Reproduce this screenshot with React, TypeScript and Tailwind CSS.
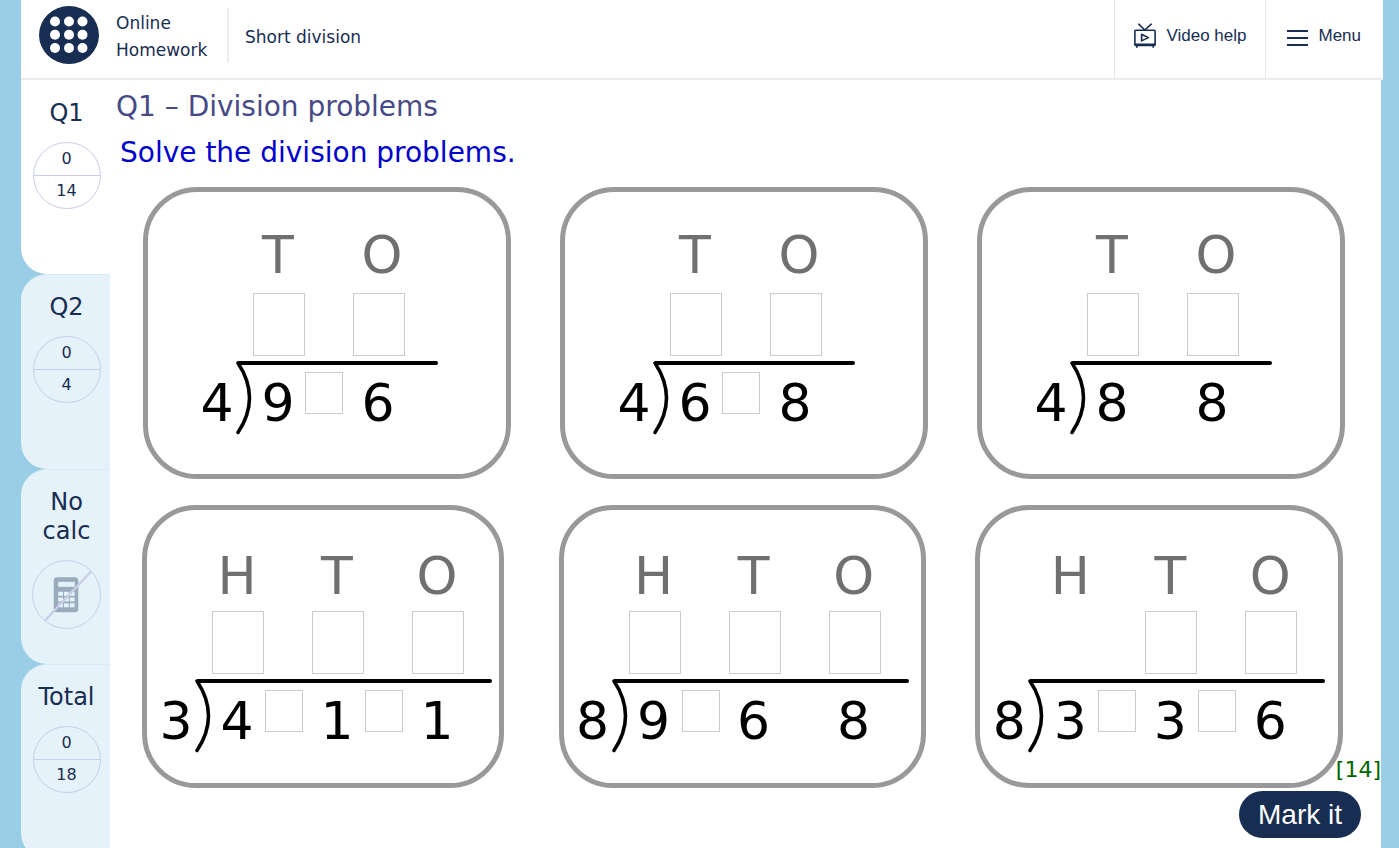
import React from 'react'
import clsx from 'clsx'

type Problem = {
  divisor: string
  digits: string[]
  // place columns that take an answer digit
  answers: boolean[]
  // carry box after the digit at the same index
  carries: boolean[]
}

const TWO_DIGIT: Problem[] = [
  { divisor: '4', digits: ['9', '6'], answers: [true, true], carries: [true, false] },
  { divisor: '4', digits: ['6', '8'], answers: [true, true], carries: [true, false] },
  { divisor: '4', digits: ['8', '8'], answers: [true, true], carries: [false, false] },
]

const THREE_DIGIT: Problem[] = [
  { divisor: '3', digits: ['4', '1', '1'], answers: [true, true, true], carries: [true, true, false] },
  { divisor: '8', digits: ['9', '6', '8'], answers: [true, true, true], carries: [true, false, false] },
  { divisor: '8', digits: ['3', '3', '6'], answers: [false, true, true], carries: [true, true, false] },
]

function Logo() {
  return (
    <svg width="60" height="58" viewBox="0 0 60 58" aria-hidden="true">
      <ellipse cx="30" cy="29" rx="30" ry="29" fill="#182d52" />
      {[15.5, 28.7, 42].map((cy) =>
        [16, 30, 43.5].map((cx) => <circle key={`${cx}-${cy}`} cx={cx} cy={cy} r="5" fill="#fff" />),
      )}
    </svg>
  )
}

function TvIcon() {
  return (
    <svg width="22" height="27" viewBox="0 0 22 27" fill="none" stroke="#182d52" strokeWidth="1.6" aria-hidden="true">
      <rect x="0.9" y="7.2" width="20.2" height="15.2" rx="0.8" />
      <path d="M4.8 1.2 10.8 7 17.3 1.2M0.9 21.4h20.2M2.8 22.8v1.4M19.2 22.8v1.4" strokeLinecap="round" />
      <path d="M7.6 11.3v6.6l6.8-3.3z" strokeLinejoin="round" />
    </svg>
  )
}

function MenuIcon() {
  return (
    <svg width="21" height="19" viewBox="0 0 21 19" fill="#182d52" aria-hidden="true">
      <rect width="21" height="2" y="3" />
      <rect width="21" height="2" y="10" />
      <rect width="21" height="2" y="17" />
    </svg>
  )
}

function NoCalcIcon() {
  return (
    <svg width="69" height="69" viewBox="0 0 69 69" aria-hidden="true">
      <circle cx="34.5" cy="34.5" r="34" fill="none" stroke="#c9cde9" />
      <rect x="21.7" y="17.2" width="24.6" height="35" rx="3.5" fill="#9aabbd" />
      <rect x="26.2" y="21.8" width="16.5" height="5" fill="#e5f2f9" />
      {[31.8, 37.5, 43.3].map((y) =>
        [26.2, 32, 37.8].map((x) => <rect key={`${x}-${y}`} x={x} y={y} width="4.8" height="4" fill="#e5f2f9" />),
      )}
      <path d="M13 60.5 59 11.5" stroke="#c9cde9" strokeWidth="2.3" />
    </svg>
  )
}

function Score({ score, total }: { score: number; total: number }) {
  return (
    <span className="flex h-[67px] w-[68px] flex-col rounded-full border border-[#c9cde9] text-[16px] leading-[30px]">
      <span className="h-[33px] border-b border-[#c9cde9] pt-px">{score}</span>
      <span>{total}</span>
    </span>
  )
}

function Tab({ label, active, children }: { label: string; active?: boolean; children: React.ReactNode }) {
  return (
    <button
      type="button"
      className={clsx(
        'flex w-full shrink-0 flex-col items-center gap-[14px] pl-0.5 hover:bg-white',
        active
          ? 'h-[194px] rounded-bl-[26px] bg-white pt-[19px]'
          : 'h-[195px] rounded-l-[26px] border-t border-[#d9ecf6] bg-[#e5f2f9] pt-[18px]',
      )}
    >
      <span className="w-16 text-[24px] leading-[29px]">{label}</span>
      {children}
    </button>
  )
}

function Bracket() {
  return (
    <svg width="17" height="74" viewBox="0 0 17 74" fill="none" stroke="#000" strokeLinecap="round" aria-hidden="true">
      <path d="M2 2H17" strokeWidth="4" strokeLinecap="butt" />
      <path d="M2 2Q25 37 2 71.5" strokeWidth="3.5" strokeLinejoin="round" />
    </svg>
  )
}

function ProblemCard({ problem, name, className }: { problem: Problem; name: string; className?: string }) {
  const wide = problem.digits.length === 3
  const places = wide ? ['H', 'T', 'O'] : ['T', 'O']

  return (
    <section
      aria-label={name}
      className={clsx(
        'rounded-[54px] border-[5px] border-[#999] text-[52px] leading-[52px]',
        wide ? 'pt-10 pb-[30px] pl-3' : 'pt-[37px] pb-[39px] pl-[52px]',
        className,
      )}
    >
      <div className={clsx('ml-[52px] flex text-center text-[#707070]', wide ? 'mb-[9px] gap-12' : 'mb-3 gap-[52px]')}>
        {places.map((p) => (
          <span key={p} className="w-[52px]">
            {p}
          </span>
        ))}
      </div>

      <div className="mb-[5px] ml-[53px] flex gap-12">
        {places.map((p, i) =>
          problem.answers[i] ? (
            <input
              key={p}
              aria-label={`${name} answer ${p}`}
              maxLength={1}
              className="h-[63px] w-[52px] border border-[#ccc] bg-white text-center text-[40px]"
            />
          ) : (
            <span key={p} className="h-[63px] w-[52px]" />
          ),
        )}
      </div>

      <div className="flex">
        <span className="w-9 pt-3 pr-0.5 text-center">
          <span className="block pt-1">{problem.divisor}</span>
        </span>
        <Bracket />
        <div className={wide ? 'w-[280px]' : 'w-[185px]'}>
          <div className="h-1 rounded-r-full bg-black" />
          <div className="flex">
            {problem.digits.map((d, i) => (
              <React.Fragment key={i}>
                <span className="w-[50px] shrink-0 pt-3 text-center">{d}</span>
                {i < problem.digits.length - 1 && (
                  <span className={clsx('flex w-[50px] shrink-0 pt-[7px]', wide ? 'pl-[3px]' : 'pl-0.5')}>
                    {problem.carries[i] && (
                      <input
                        aria-label={`${name} carry ${i + 1}`}
                        maxLength={1}
                        className="h-[42px] w-[38px] border border-[#ccc] bg-white text-center text-[26px]"
                      />
                    )}
                  </span>
                )}
              </React.Fragment>
            ))}
          </div>
        </div>
      </div>
    </section>
  )
}

export default function App() {
  return (
    <div className="flex h-screen flex-col overflow-hidden bg-[#9acde6] pr-4 pl-[21px] font-['Verdana','DejaVu_Sans',sans-serif] text-[#182d52]">
      <header className="flex h-20 shrink-0 border-b-2 border-[#e9ecec] bg-white">
        <div className="flex items-start gap-[17px] pt-1.5 pl-[18px] text-[17px]">
          <Logo />
          <a href="#" className="w-[94px] pt-1 leading-[27px]">
            Online Homework
          </a>
          <div className="mt-0.5 flex h-[55px] items-center border-l-2 border-[#eceeee] pt-1 pl-4">Short division</div>
        </div>
        <div className="ml-auto flex font-['Liberation_Sans',Arial,sans-serif] text-[17px]">
          <button type="button" className="flex items-center gap-2.5 border-l border-[#e6e6e6] px-[19px] pb-1.5">
            <TvIcon />
            Video help
          </button>
          <button type="button" className="flex items-center gap-2.5 border-l border-[#e6e6e6] pr-[22px] pb-1.5 pl-[21px]">
            <MenuIcon />
            Menu
          </button>
        </div>
      </header>

      <div className="mr-0.5 flex min-h-0 flex-1">
        <nav aria-label="Questions" className="flex w-[89px] shrink-0 flex-col">
          <Tab label="Q1" active>
            <Score score={0} total={14} />
          </Tab>
          <Tab label="Q2">
            <Score score={0} total={4} />
          </Tab>
          <Tab label="No calc">
            <NoCalcIcon />
          </Tab>
          <Tab label="Total">
            <Score score={0} total={18} />
          </Tab>
        </nav>

        <main className="relative flex-1 bg-white">
          <h1 className="pt-[9px] pl-1.5 text-[28px] leading-9 text-[#464a86]">Q1 – Division problems</h1>
          <p className="mt-2.5 pl-2.5 text-[28px] leading-9 text-[#0000cd]">Solve the division problems.</p>

          <div className="mt-4 grid grid-cols-3 gap-x-[49px] pr-9 pl-[33px] text-black">
            {TWO_DIGIT.map((p, i) => (
              <ProblemCard key={i} problem={p} name={`Problem ${i + 1}`} />
            ))}
          </div>
          <div className="mt-[26px] grid grid-cols-3 gap-x-[49px] pr-[38px] pl-8 text-black">
            {THREE_DIGIT.map((p, i) => (
              <ProblemCard key={i} problem={p} name={`Problem ${i + 4}`} className={i === 0 ? 'mr-1.5' : ''} />
            ))}
          </div>

          <p className="absolute right-0 bottom-16 text-[22px] leading-7 text-[#006400]">[14]</p>
          <button
            type="button"
            className="absolute right-5 bottom-2.5 h-[47px] rounded-full bg-[#182d52] px-[19px] font-['Liberation_Sans',Arial,sans-serif] text-[28px] text-white"
          >
            Mark it
          </button>
        </main>
      </div>
    </div>
  )
}
